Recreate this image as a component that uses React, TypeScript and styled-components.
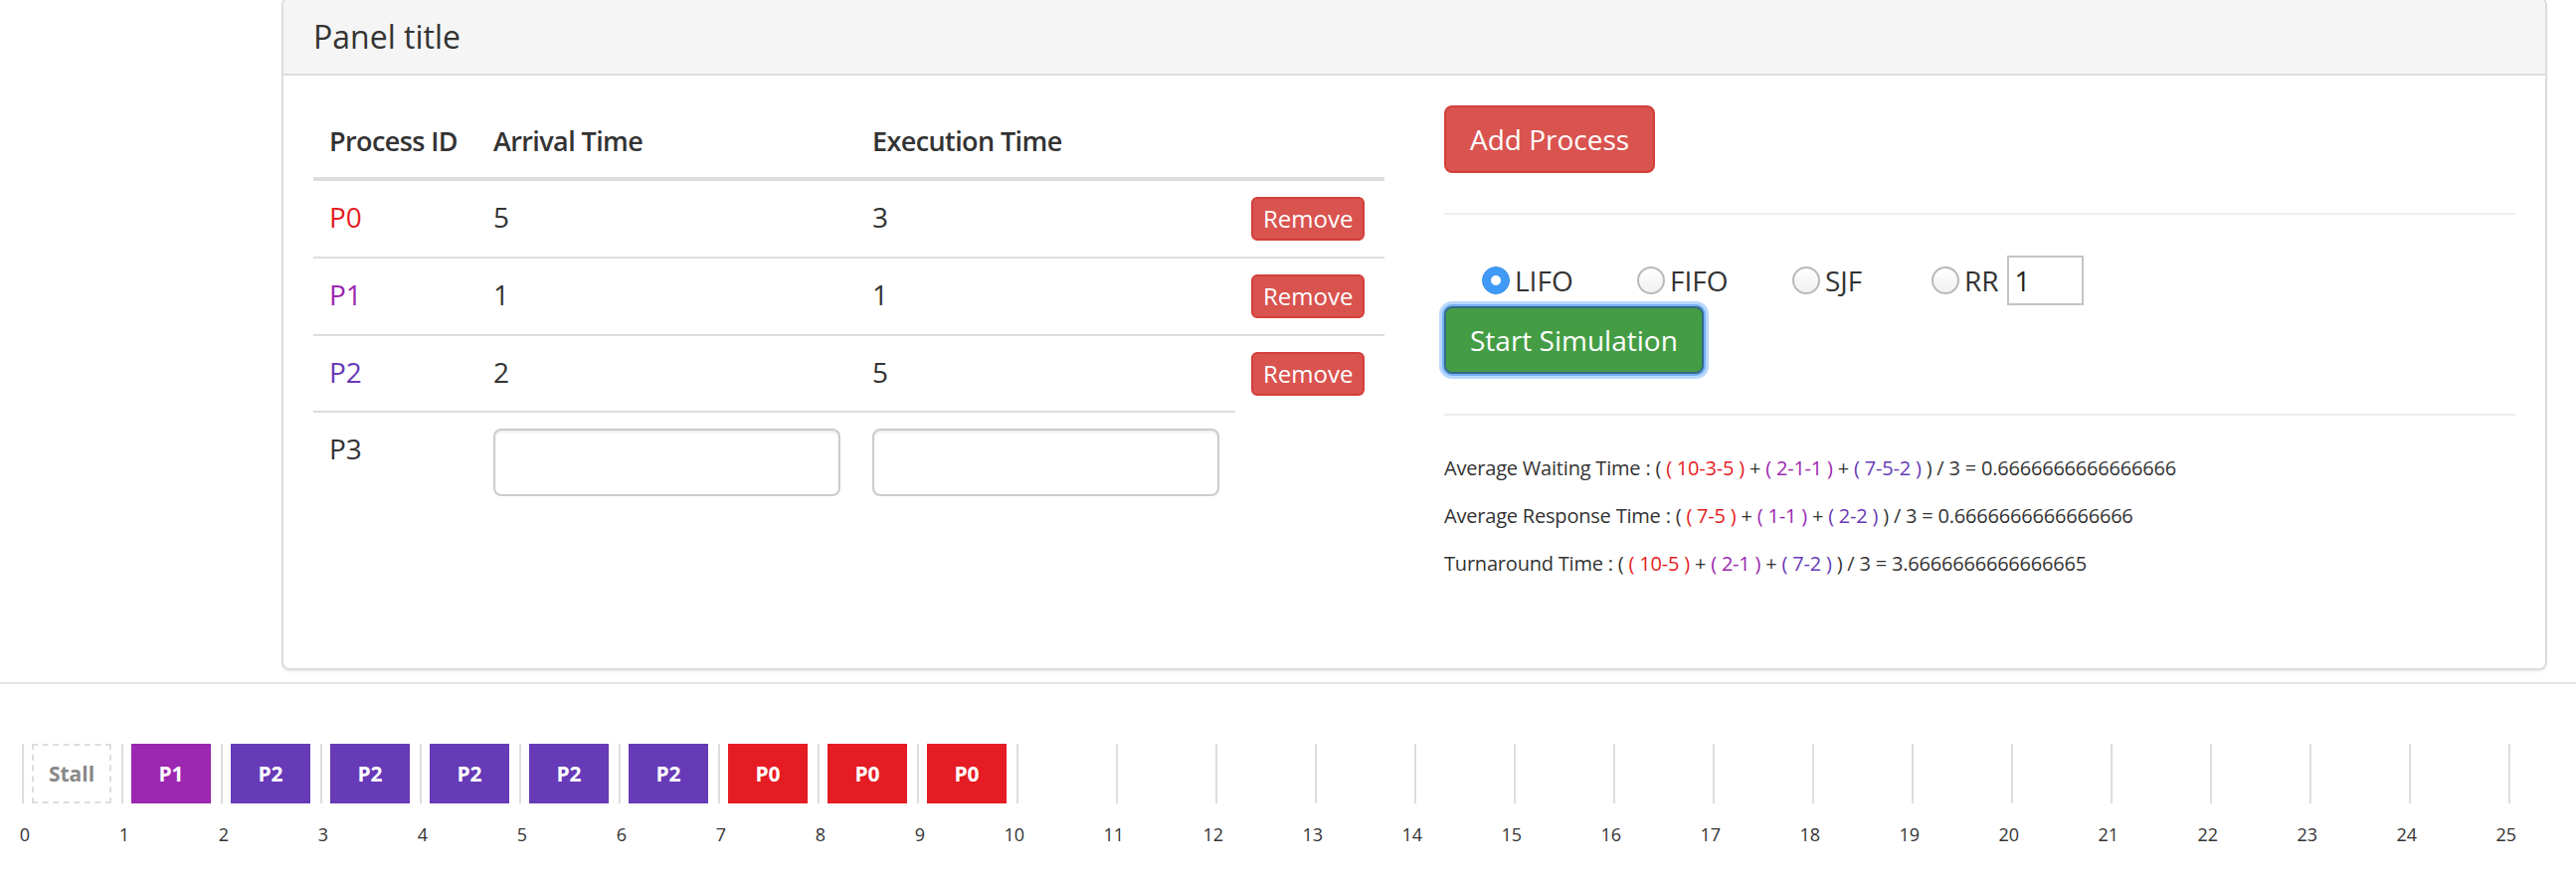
import React from 'react';
import styled, { createGlobalStyle, css } from 'styled-components';

const GlobalStyle = createGlobalStyle`
  html, body { margin: 0; padding: 0; background: #fff; }
  body { font-family: "Open Sans", "Noto Sans", sans-serif; color: #333; }
  * { box-sizing: border-box; }
`;

const PCOLOR: Record<string, string> = { P0: '#e51c23', P1: '#9c27b0', P2: '#673ab7', P3: '#333' };

const Panel = styled.section`
  margin: -3px 29px 12px 283px;
  border: 2px solid #ddd;
  border-radius: 8px;
  box-shadow: 0 2px 2px rgba(0, 0, 0, 0.06);
  background: #fff;
`;

const PanelHeading = styled.header`
  padding: 20px 30px;
  background: #f5f5f5;
  border-bottom: 2px solid #ddd;
  border-radius: 6px 6px 0 0;
`;

const PanelTitle = styled.h3`
  margin: 0;
  font-size: 32px;
  line-height: 1.1;
  font-weight: 400;
  color: #333;
`;

const PanelBody = styled.div`
  min-height: 596px;
  padding: 30px;
  display: grid;
  grid-template-columns: 1fr 1fr;
  column-gap: 60px;
  align-items: start;
`;

const Table = styled.table`
  width: 100%;
  table-layout: fixed;
  border-collapse: collapse;
  margin-bottom: 40px;
  font-size: 28px;
  line-height: 40px;
`;

const Th = styled.th<{ $w?: number }>`
  ${(p) => p.$w !== undefined && css`width: ${p.$w}px;`}
  padding: 16px;
  text-align: left;
  vertical-align: bottom;
  font-size: 27px;
  font-weight: 600;
  letter-spacing: -0.6px;
  white-space: nowrap;
  border-bottom: 4px solid #ddd;
`;

const Td = styled.td<{ $color?: string }>`
  padding: 16px;
  vertical-align: top;
  border-top: 2px solid #ddd;
  color: ${(p) => p.$color || '#333'};
`;

const RemoveButton = styled.button`
  display: inline-block;
  padding: 2px 10px;
  font-family: inherit;
  font-size: 24px;
  font-weight: 500;
  line-height: 36px;
  color: #fff;
  background: #d9534f;
  border: 2px solid #d43f3a;
  border-radius: 6px;
  white-space: nowrap;
`;

const TextInput = styled.input`
  display: block;
  width: 100%;
  height: 68px;
  padding: 12px 24px;
  font-family: inherit;
  font-size: 28px;
  color: #555;
  background: #fff;
  border: 2px solid #ccc;
  border-radius: 8px;
  box-shadow: inset 0 2px 2px rgba(0, 0, 0, 0.075);
`;

const Controls = styled.div`
  display: flex;
  flex-direction: column;
  align-items: flex-start;
`;

const BigButton = styled.button<{ $variant: 'danger' | 'success' }>`
  display: inline-block;
  padding: 12px 24px;
  font-family: inherit;
  font-size: 28px;
  font-weight: 500;
  line-height: 40px;
  color: #fff;
  border-radius: 8px;
  white-space: nowrap;
  ${(p) =>
    p.$variant === 'danger'
      ? css`
          background: #d9534f;
          border: 2px solid #d43f3a;
        `
      : css`
          background: #449d44;
          border: 2px solid #36698a;
          box-shadow: 0 0 0 2px #74b0f4, 0 0 0 5px #b9d8fc;
        `}
`;

const Rule = styled.hr`
  align-self: stretch;
  margin: 40px 0;
  border: 0;
  border-top: 2px solid #eee;
  height: 0;
`;

const RadioRow = styled.div`
  display: flex;
  align-items: center;
  height: 52px;
  padding-left: 38px;
  font-size: 28px;
`;

const RadioLabel = styled.label<{ $w?: number }>`
  display: flex;
  align-items: center;
  ${(p) => p.$w !== undefined && css`width: ${p.$w}px;`}
`;

const RadioDot = styled.span<{ $checked?: boolean }>`
  width: 28px;
  height: 28px;
  border-radius: 50%;
  margin-right: 5px;
  flex: none;
  position: relative;
  ${(p) =>
    p.$checked
      ? css`
          background: #3f9bf7;
          border: 1px solid #3a8ee6;
          &::after {
            content: '';
            position: absolute;
            left: 50%;
            top: 50%;
            width: 10px;
            height: 10px;
            margin: -5px 0 0 -5px;
            border-radius: 50%;
            background: #fff;
          }
        `
      : css`
          background: linear-gradient(#fff, #f1f1f1);
          border: 2px solid #b9b9b9;
        `}
`;

const QuantumInput = styled.input`
  width: 77px;
  height: 50px;
  margin-left: 8px;
  padding: 0 6px;
  font-family: inherit;
  font-size: 28px;
  color: #222;
  border: 2px solid #c4c4c4;
  border-radius: 0;
  background: #fff;
`;

const Stat = styled.p`
  margin: 0 0 22px;
  font-size: 20px;
  line-height: 26px;
  letter-spacing: -0.2px;
  white-space: nowrap;
`;

const Part = styled.span<{ $color: string }>`
  color: ${(p) => p.$color};
`;

const Timeline = styled.div`
  border-top: 2px solid #e3e3e3;
  padding-top: 60px;
`;

const Track = styled.div`
  display: flex;
  margin-left: 22px;
  height: 60px;
`;

const Slot = styled.div<{ $last?: boolean }>`
  width: ${(p) => (p.$last ? 0 : 100)}px;
  flex: none;
  border-left: 2px solid #ddd;
  padding-left: 8px;
`;

const Block = styled.div<{ $bg?: string; $stall?: boolean }>`
  width: 80px;
  height: 60px;
  display: flex;
  align-items: center;
  justify-content: center;
  font-size: 21px;
  font-weight: 700;
  ${(p) =>
    p.$stall
      ? css`
          border: 2px dashed #ddd;
          color: #888;
        `
      : css`
          background: ${p.$bg};
          color: #fff;
        `}
`;

const Ruler = styled.div`
  display: flex;
  margin-top: 19px;
  font-size: 18px;
  line-height: 24px;
  color: #333;
`;

const Tick = styled.span<{ $w: number }>`
  width: ${(p) => p.$w}px;
  flex: none;
  text-align: right;
`;

const rows = [
  { id: 'P0', arrival: '5', exec: '3' },
  { id: 'P1', arrival: '1', exec: '1' },
  { id: 'P2', arrival: '2', exec: '5' },
];

const schedule: (string | null)[] = [
  'Stall', 'P1', 'P2', 'P2', 'P2', 'P2', 'P2', 'P0', 'P0', 'P0',
  ...Array.from({ length: 15 }, () => null),
];

type Seg = { t: string; c?: string };

const StatLine: React.FC<{ label: string; segs: Seg[]; tail: string }> = ({ label, segs, tail }) => (
  <Stat>
    {label} : ({' '}
    {segs.map((s, i) => (
      <React.Fragment key={i}>
        {i > 0 && ' + '}
        <Part $color={s.c || '#333'}>( {s.t} )</Part>
      </React.Fragment>
    ))}{' '}
    ) / 3 = {tail}
  </Stat>
);

export default function App() {
  return (
    <>
      <GlobalStyle />
      <Panel>
        <PanelHeading>
          <PanelTitle>Panel title</PanelTitle>
        </PanelHeading>
        <PanelBody>
          <Table>
            <thead>
              <tr>
                <Th $w={165}>Process ID</Th>
                <Th $w={381}>Arrival Time</Th>
                <Th $w={381}>Execution Time</Th>
                <Th />
              </tr>
            </thead>
            <tbody>
              {rows.map((r) => (
                <tr key={r.id}>
                  <Td $color={PCOLOR[r.id]}>{r.id}</Td>
                  <Td>{r.arrival}</Td>
                  <Td>{r.exec}</Td>
                  <Td>
                    <RemoveButton>Remove</RemoveButton>
                  </Td>
                </tr>
              ))}
              <tr>
                <Td>P3</Td>
                <Td>
                  <TextInput />
                </Td>
                <Td>
                  <TextInput />
                </Td>
              </tr>
            </tbody>
          </Table>
          <Controls>
            <BigButton $variant="danger">Add Process</BigButton>
            <Rule />
            <RadioRow>
              <RadioLabel $w={156}>
                <RadioDot $checked />
                LIFO
              </RadioLabel>
              <RadioLabel $w={156}>
                <RadioDot />
                FIFO
              </RadioLabel>
              <RadioLabel $w={140}>
                <RadioDot />
                SJF
              </RadioLabel>
              <RadioLabel>
                <RadioDot />
                RR
                <QuantumInput defaultValue="1" />
              </RadioLabel>
            </RadioRow>
            <BigButton $variant="success">Start Simulation</BigButton>
            <Rule />
            <StatLine
              label="Average Waiting Time"
              segs={[
                { t: '10-3-5', c: PCOLOR.P0 },
                { t: '2-1-1', c: PCOLOR.P1 },
                { t: '7-5-2', c: PCOLOR.P2 },
              ]}
              tail="0.6666666666666666"
            />
            <StatLine
              label="Average Response Time"
              segs={[
                { t: '7-5', c: PCOLOR.P0 },
                { t: '1-1', c: PCOLOR.P1 },
                { t: '2-2', c: PCOLOR.P2 },
              ]}
              tail="0.6666666666666666"
            />
            <StatLine
              label="Turnaround Time"
              segs={[
                { t: '10-5', c: PCOLOR.P0 },
                { t: '2-1', c: PCOLOR.P1 },
                { t: '7-2', c: PCOLOR.P2 },
              ]}
              tail="3.6666666666666665"
            />
          </Controls>
        </PanelBody>
      </Panel>
      <Timeline>
        <Track>
          {schedule.map((s, i) => (
            <Slot key={i}>
              {s === 'Stall' && <Block $stall>Stall</Block>}
              {s && s !== 'Stall' && <Block $bg={PCOLOR[s]}>{s}</Block>}
            </Slot>
          ))}
          <Slot $last />
        </Track>
        <Ruler>
          {Array.from({ length: 26 }, (_, i) => (
            <Tick key={i} $w={i === 0 ? 30 : 100}>
              {i}
            </Tick>
          ))}
        </Ruler>
      </Timeline>
    </>
  );
}
